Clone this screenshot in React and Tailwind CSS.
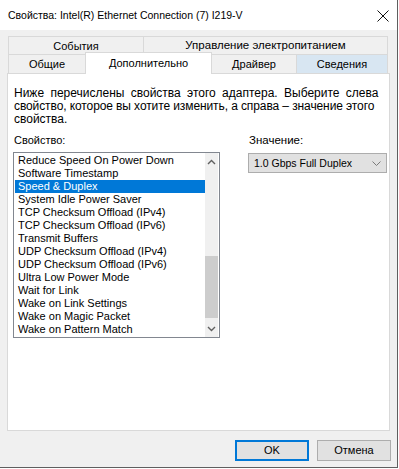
import React from 'react';

const items = [
    'Reduce Speed On Power Down',
    'Software Timestamp',
    'Speed & Duplex',
    'System Idle Power Saver',
    'TCP Checksum Offload (IPv4)',
    'TCP Checksum Offload (IPv6)',
    'Transmit Buffers',
    'UDP Checksum Offload (IPv4)',
    'UDP Checksum Offload (IPv6)',
    'Ultra Low Power Mode',
    'Wait for Link',
    'Wake on Link Settings',
    'Wake on Magic Packet',
    'Wake on Pattern Match',
];

const Chevron = ({ up }) => (
    <svg width="9" height="6" viewBox="0 0 9 6" className="block">
        <polyline
            points={up ? '1,5 4.5,1.5 8,5' : '1,1 4.5,4.5 8,1'}
            fill="none"
            stroke="#606060"
            strokeWidth="1.4"
        />
    </svg>
);

export default function App() {
    const selected = 'Speed & Duplex';

    return (
        <div className="w-[398px] h-[468px] border-r border-b border-[#5f5f5f] bg-[#f0f0f0] flex flex-col text-black" style={{ fontFamily: '"Liberation Sans", Arial, sans-serif' }}>
            {/* заголовок окна */}
            <div className="h-[30px] bg-white flex items-center justify-between pl-[8px] pr-[7px] shrink-0">
                <span className="text-[10.5px] leading-none">Свойства: Intel(R) Ethernet Connection (7) I219-V</span>
                <svg width="12" height="12" viewBox="0 0 12 12" className="mr-[1px] mt-[1px]">
                    <line x1="0.5" y1="0.5" x2="11.5" y2="11.5" stroke="#111" strokeWidth="1" />
                    <line x1="11.5" y1="0.5" x2="0.5" y2="11.5" stroke="#111" strokeWidth="1" />
                </svg>
            </div>

            <div className="flex-1 flex flex-col pt-[6px] pl-[7px] text-[11px]">
                {/* вкладки, верхний ряд */}
                <div className="flex ml-[1px] h-[18px]">
                    <div className="w-[136px] border-l border-t border-r border-[#d9d9d9] flex items-center justify-center leading-none pt-[1px]">События</div>
                    <div className="w-[244px] border-t border-r border-[#d9d9d9] flex items-center justify-center leading-none pt-[1px] text-[11.5px]">Управление электропитанием</div>
                </div>
                {/* вкладки, нижний ряд */}
                <div className="flex items-start ml-[1px] h-[19px]">
                    <div className="w-[77px] h-[19px] border-l border-t border-[#d9d9d9] flex items-center justify-center leading-none pt-[1px]">Общие</div>
                    <div className="w-[127px] h-[22px] -mt-[2px] relative z-10 bg-white border-l border-t border-r border-[#d9d9d9] flex items-start justify-center pt-[5px] leading-none">Дополнительно</div>
                    <div className="w-[85px] h-[19px] border-t border-r border-[#d9d9d9] flex items-center justify-center leading-none pt-[1px]">Драйвер</div>
                    <div className="w-[91px] h-[19px] border-t border-r border-[#d9d9d9] bg-[#d8e6f2] flex items-center justify-center leading-none pt-[1px]">Сведения</div>
                </div>

                {/* панель */}
                <div className="w-[383px] h-[358px] bg-white border border-[#d9d9d9] pt-[13px] px-[6px]">
                    <p className="leading-[13px] text-[12px] whitespace-nowrap">
                        <span className="[word-spacing:3px]">Ниже перечислены свойства этого адаптера. Выберите слева</span><br />
                        <span className="tracking-[-0.1px]">свойство, которое вы хотите изменить, а справа – значение этого</span><br />
                        свойства.
                    </p>

                    <div className="flex mt-[8px]">
                        <div className="flex flex-col">
                            <div className="leading-[13px] h-[13px]">Свойство:</div>
                            <div className="mt-[5px] -ml-[1px] w-[207px] h-[186px] border border-[#828790] flex">
                                <div className="flex-1 pt-[1px] pl-[1px] overflow-hidden">
                                    {items.map((item) => (
                                        <div
                                            key={item}
                                            className={`h-[13px] leading-[13px] pl-[3px] whitespace-nowrap ${item === selected ? 'bg-[#0078d7] text-white' : ''}`}
                                        >
                                            {item}
                                        </div>
                                    ))}
                                </div>
                                <div className="w-[13px] mr-[1px] bg-[#f0f0f0] flex flex-col items-center">
                                    <div className="h-[17px] flex items-center justify-center">
                                        <Chevron up />
                                    </div>
                                    <div className="flex-1 w-full flex flex-col justify-end">
                                        <div className="h-[62px] w-full bg-[#cdcdcd] mb-[2px]" />
                                    </div>
                                    <div className="h-[17px] flex items-center justify-center">
                                        <Chevron />
                                    </div>
                                </div>
                            </div>
                        </div>

                        <div className="flex flex-col ml-[28px]">
                            <div className="leading-[13px] h-[13px] ml-[1px] text-[11.5px]">Значение:</div>
                            <div className="mt-[6px] w-[139px] h-[20px] bg-[#e1e1e1] border border-[#adadad] flex items-center justify-between pl-[5px] pr-[5px] text-[10.5px]">
                                <span className="leading-none">1.0 Gbps Full Duplex</span>
                                <svg width="9" height="5" viewBox="0 0 9 5">
                                    <polyline points="0.5,0.5 4.5,4.5 8.5,0.5" fill="none" stroke="#7a7a7a" strokeWidth="1" />
                                </svg>
                            </div>
                        </div>
                    </div>
                </div>

                {/* кнопки */}
                <div className="flex justify-end gap-[8px] mt-[9px] pr-[6px]">
                    <button className="w-[74px] h-[21px] bg-[#e1e1e1] border-2 border-[#0078d7] leading-none">OK</button>
                    <button className="w-[74px] h-[21px] bg-[#e1e1e1] border border-[#adadad] leading-none">Отмена</button>
                </div>
            </div>
        </div>
    );
}
